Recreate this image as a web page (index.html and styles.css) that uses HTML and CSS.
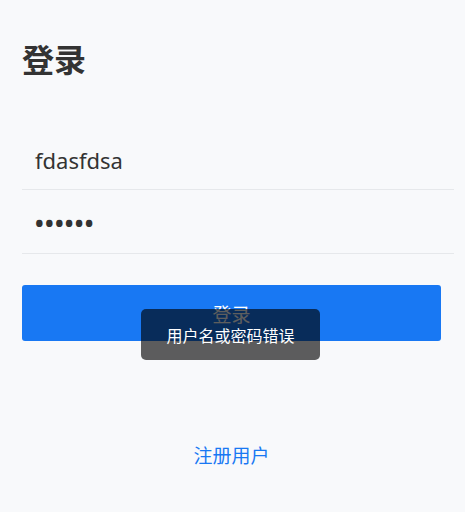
FILE: index.html
```html
<!DOCTYPE html>
<html lang="zh">
<head>
<meta charset="utf-8">
<link rel="stylesheet" href="styles.css">
</head>
<body>
<div class="page">
  <h1 class="title">登录</h1>
  <div class="field"><span class="value">fdasfdsa</span></div>
  <div class="field"><span class="dots">••••••</span></div>
  <button class="btn">登录</button>
  <div class="link">注册用户</div>
</div>
<div class="toast">用户名或密码错误</div>
</body>
</html>
```
FILE: styles.css
```css
html, body {
  margin: 0;
  padding: 0;
  background: #f8f9fb;
  font-family: "Noto Sans", "Noto Sans CJK SC", sans-serif;
  color: #333333;
}
.page {
  padding: 0 11px 0 22px;
  display: flex;
  flex-direction: column;
}
.title {
  margin: 38px 0 0 0;
  height: 40px;
  font-size: 32px;
  line-height: 40px;
  font-weight: bold;
  font-family: "Noto Sans CJK SC", sans-serif;
}
.field {
  height: 63px;
  border-bottom: 1px solid #e6e8eb;
  display: flex;
  align-items: center;
  padding-left: 13px;
}
.title + .field {
  margin-top: 48px;
}
.value {
  font-size: 22px;
  line-height: 30px;
  padding-top: 4px;
}
.dots {
  font-size: 23px;
  letter-spacing: 1.3px;
  line-height: 30px;
  padding-top: 2px;
  font-weight: bold;
  font-family: "Noto Sans", sans-serif;
  color: #333;
}
.btn {
  margin-top: 31px;
  width: 419px;
  height: 56px;
  border: none;
  border-radius: 3px;
  background: #1878f3;
  color: #ffffff;
  font-size: 19px;
  font-family: "Noto Sans CJK SC", sans-serif;
  padding: 0;
}
.link {
  width: 419px;
  margin-top: 99px;
  text-align: center;
  color: #1878f3;
  font-size: 19px;
  line-height: 30px;
  font-family: "Noto Sans CJK SC", sans-serif;
}
.toast {
  position: absolute;
  left: 141px;
  top: 309px;
  width: 179px;
  height: 51px;
  box-sizing: border-box;
  padding-top: 14px;
  border-radius: 5px;
  background: rgba(0, 0, 0, 0.63);
  color: #ffffff;
  text-align: center;
  font-size: 16px;
  line-height: 24px;
  font-family: "Noto Sans CJK SC", sans-serif;
}
```
